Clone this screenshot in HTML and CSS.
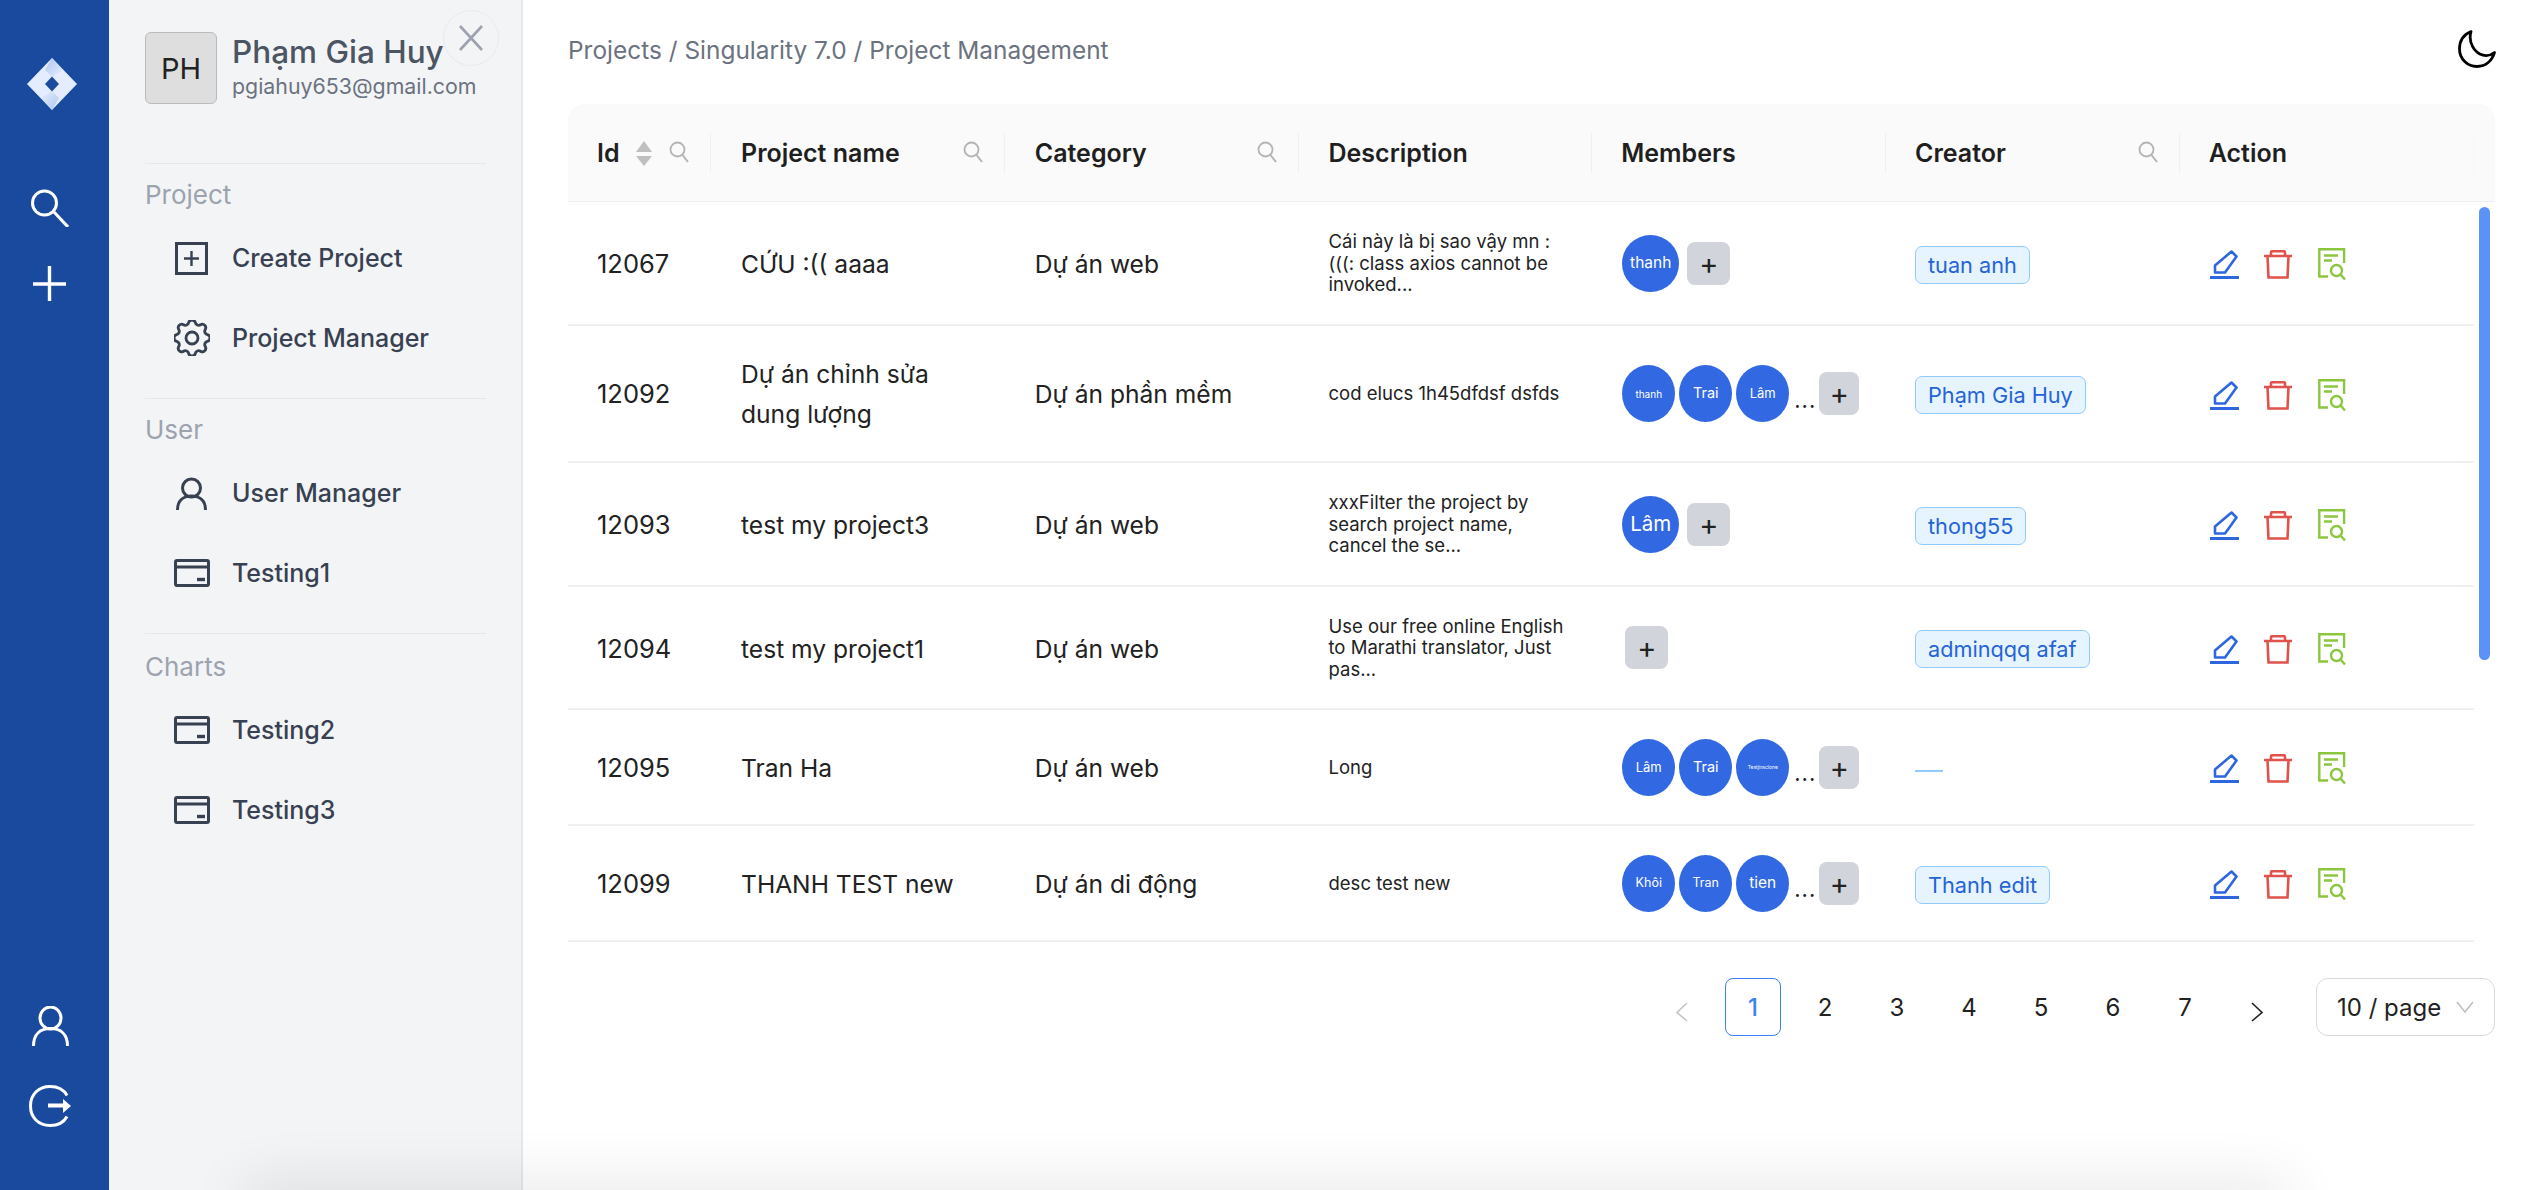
FILE: index.html
```html
<!DOCTYPE html>
<html lang="vi">
<head>
<meta charset="utf-8">
<title>Project Management</title>
<link rel="stylesheet" href="styles.css">
</head>
<body>
<svg class="defs" width="0" height="0" aria-hidden="true">
  <defs>
    <symbol id="card" viewBox="0 0 36 28"><rect x="1.5" y="1.5" width="33" height="25" rx="1.5" fill="none" stroke="currentColor" stroke-width="3"/><path d="M2 8h32" stroke="currentColor" stroke-width="3"/><path d="M23 20.5h8" stroke="currentColor" stroke-width="3.4"/></symbol>
    <symbol id="mag" viewBox="0 0 20 22"><circle cx="8.5" cy="8.5" r="7" fill="none" stroke="currentColor" stroke-width="1.8"/><path d="M13.5 14l5.5 7" stroke="currentColor" stroke-width="2"/></symbol>
    <symbol id="edit" viewBox="0 0 29 29"><path d="M5 22.500V15.500L21.500 1.500l5 5L15 22.500z" fill="none" stroke="currentColor" stroke-width="2.600" stroke-linejoin="round"/><path d="M0 27.500h29" stroke="currentColor" stroke-width="3"/></symbol>
    <symbol id="trash" viewBox="0 0 28 29"><path d="M0 6h28M3.500 6l1 21.500h19l1-21.500M7 6V2.500c0-.8.5-1.300 1.300-1.300h11.400c.8 0 1.300.5 1.300 1.300V6" fill="none" stroke="currentColor" stroke-width="2.600"/></symbol>
    <symbol id="doc" viewBox="0 0 28 32"><path d="M10 28.500H1.300V1.300h24.800V15" fill="none" stroke="currentColor" stroke-width="2.400"/><path d="M6 7.500h14M6 12.500h8" stroke="currentColor" stroke-width="2.400"/><circle cx="18.500" cy="22.500" r="5.500" fill="none" stroke="currentColor" stroke-width="2.400"/><path d="M22.500 26.500l4.500 5" stroke="currentColor" stroke-width="2.400"/></symbol>
  </defs>
</svg>

<div class="app">
  <nav class="rail">
    <div class="rail-top">
      <svg class="logo" width="50" height="52" viewBox="0 0 50 52">
        <defs>
          <linearGradient id="fold-a" x1="0" y1="0" x2="1" y2="1"><stop offset="0" stop-color="#a9c3ee"/><stop offset="1" stop-color="#e4edff"/></linearGradient>
          <linearGradient id="fold-b" x1="1" y1="1" x2="0" y2="0"><stop offset="0" stop-color="#a9c3ee"/><stop offset="1" stop-color="#e4edff"/></linearGradient>
        </defs>
        <path d="M25 0l25 26-25 26L0 26z" fill="#e4edff"/>
        <path d="M25 0l11 12-11 7-7-7z" fill="url(#fold-a)" opacity=".9"/>
        <path d="M25 52L14 40l11-7 7 7z" fill="url(#fold-b)" opacity=".9"/>
        <path d="M25 18.500l7 7.500-7 7.500-7-7.500z" fill="#1a4a9e"/>
      </svg>
      <svg class="rail-search" width="38" height="38" viewBox="0 0 38 38"><circle cx="13.500" cy="14" r="12" fill="none" stroke="#fff" stroke-width="3"/><path d="M23 23l14 15" stroke="#fff" stroke-width="3"/></svg>
      <svg class="rail-plus" width="33" height="35" viewBox="0 0 33 35"><path d="M0 18h33M16.500 0v35" stroke="#fff" stroke-width="3.400"/></svg>
    </div>
    <div class="rail-bottom">
      <svg width="37" height="40" viewBox="0 0 37 40"><ellipse cx="18.500" cy="12" rx="10.500" ry="11" fill="none" stroke="#fff" stroke-width="3"/><path d="M1.500 40c0-12 7-17.500 17-17.500s17 5.500 17 17.500" fill="none" stroke="#fff" stroke-width="3"/></svg>
      <svg width="43" height="42" viewBox="0 0 43 42"><path d="M38 10.500C34.500 4 29 1.500 21 1.500 10 1.500 1.500 9 1.500 21s8.500 19.500 19.500 19.500c8 0 13.500-2.500 17-9" fill="none" stroke="#fff" stroke-width="3"/><path d="M19 20.500h17" stroke="#fff" stroke-width="4"/><path d="M34 14l8 7-8 7z" fill="#fff"/></svg>
    </div>
  </nav>

  <aside class="side">
    <button class="close" type="button" aria-label="Close">
      <svg width="24" height="26" viewBox="0 0 24 26"><path d="M1 1l22 24M23 1L1 25" stroke="#9ca3af" stroke-width="2.600"/></svg>
    </button>
    <div class="profile">
      <div class="initials">PH</div>
      <div class="who">
        <div class="who-name">Phạm Gia Huy</div>
        <div class="who-mail">pgiahuy653@gmail.com</div>
      </div>
    </div>
    <section class="group">
      <h4 class="group-title">Project</h4>
      <a class="item"><span class="item-icon"><svg width="33" height="33" viewBox="0 0 33 33"><rect x="1.500" y="1.500" width="30" height="30" fill="none" stroke="currentColor" stroke-width="3"/><path d="M9 16.500h15M16.500 9v15" stroke="currentColor" stroke-width="2.400"/></svg></span>Create Project</a>
      <a class="item"><span class="item-icon"><svg width="36" height="36" viewBox="3 3 18 18"><path d="M10.325 4.317c.426-1.756 2.924-1.756 3.350 0a1.724 1.724 0 002.573 1.066c1.543-.94 3.310.826 2.370 2.370a1.724 1.724 0 001.065 2.572c1.756.426 1.756 2.924 0 3.350a1.724 1.724 0 00-1.066 2.573c.94 1.543-.826 3.310-2.370 2.370a1.724 1.724 0 00-2.572 1.065c-.426 1.756-2.924 1.756-3.350 0a1.724 1.724 0 00-2.573-1.066c-1.543.94-3.310-.826-2.370-2.370a1.724 1.724 0 00-1.065-2.572c-1.756-.426-1.756-2.924 0-3.350a1.724 1.724 0 001.066-2.573c-.94-1.543.826-3.310 2.370-2.370.996.608 2.296.07 2.572-1.065z" fill="none" stroke="currentColor" stroke-width="1.400"/><circle cx="12" cy="12" r="3" fill="none" stroke="currentColor" stroke-width="1.400"/></svg></span>Project Manager</a>
    </section>
    <section class="group">
      <h4 class="group-title">User</h4>
      <a class="item"><span class="item-icon"><svg width="31" height="33" viewBox="0 0 31 33"><circle cx="15.500" cy="11" r="9" fill="none" stroke="currentColor" stroke-width="3"/><path d="M1.500 33c0-9.500 6-14 14-14s14 4.500 14 14" fill="none" stroke="currentColor" stroke-width="3"/></svg></span>User Manager</a>
      <a class="item"><span class="item-icon"><svg width="36" height="28"><use href="#card"/></svg></span>Testing1</a>
    </section>
    <section class="group">
      <h4 class="group-title">Charts</h4>
      <a class="item"><span class="item-icon"><svg width="36" height="28"><use href="#card"/></svg></span>Testing2</a>
      <a class="item"><span class="item-icon"><svg width="36" height="28"><use href="#card"/></svg></span>Testing3</a>
    </section>
  </aside>

  <main class="main">
    <header class="top">
      <div class="crumbs">Projects / Singularity 7.0 / Project Management</div>
      <svg class="moon" width="38" height="38" viewBox="0 0 38 38"><path d="M13 1.500C4.500 5 1.500 12 1.500 19c0 10 8 17.500 17.500 17.500 9 0 15-6 17.500-14-3.500 2.700-7.500 3.700-11.500 2.700C16 23 10 12 13 1.500z" fill="none" stroke="#000" stroke-width="2.800" stroke-linejoin="round"/></svg>
    </header>

    <div class="board">
      <div class="thumb"></div>
      <table class="grid">
        <colgroup>
          <col class="c-id"><col class="c-m"><col class="c-m"><col class="c-m"><col class="c-m"><col class="c-m"><col class="c-m"><col class="c-gut">
        </colgroup>
        <thead>
          <tr>
            <th class="first"><div class="th"><span>Id</span><span class="th-tools"><span class="sort"><i class="up"></i><i class="down"></i></span><svg class="mag" width="20" height="22"><use href="#mag"/></svg></span></div></th>
            <th class="th-name"><div class="th"><span>Project name</span><svg class="mag" width="20" height="22"><use href="#mag"/></svg></div></th>
            <th class="th-shift"><div class="th"><span>Category</span><svg class="mag" width="20" height="22"><use href="#mag"/></svg></div></th>
            <th class="th-shift"><div class="th"><span>Description</span></div></th>
            <th><div class="th"><span>Members</span></div></th>
            <th><div class="th"><span>Creator</span><svg class="mag" width="20" height="22"><use href="#mag"/></svg></div></th>
            <th><div class="th"><span>Action</span></div></th>
            <th class="gutter-head"></th>
          </tr>
        </thead>
        <tbody>
          <tr class="r-124">
            <td class="id">12067</td><td class="name">CỨU :(( aaaa</td><td class="cat">Dự án web</td>
            <td class="desc">Cái này là bị sao vậy mn : (((: class axios cannot be invoked...</td>
            <td class="mem"><div class="members"><span class="ava wide f15">thanh</span><button class="add" type="button">+</button></div></td>
            <td><span class="tag">tuan anh</span></td>
            <td class="act"><div class="acts"><svg class="a-edit" width="29" height="29"><use href="#edit"/></svg><svg class="a-del" width="28" height="29"><use href="#trash"/></svg><svg class="a-doc" width="28" height="32"><use href="#doc"/></svg></div></td>
            <td class="gutter"></td>
          </tr>
          <tr class="r-137">
            <td class="id">12092</td><td class="name">Dự án chỉnh sửa dung lượng</td><td class="cat">Dự án phần mềm</td>
            <td class="desc">cod elucs 1h45dfdsf dsfds</td>
            <td class="mem"><div class="members"><span class="ava f10">thanh</span><span class="ava f14">Trai</span><span class="ava f13">Lâm</span><span class="more">...</span><button class="add narrow" type="button">+</button></div></td>
            <td><span class="tag">Phạm Gia Huy</span></td>
            <td class="act"><div class="acts"><svg class="a-edit" width="29" height="29"><use href="#edit"/></svg><svg class="a-del" width="28" height="29"><use href="#trash"/></svg><svg class="a-doc" width="28" height="32"><use href="#doc"/></svg></div></td>
            <td class="gutter"></td>
          </tr>
          <tr class="r-124">
            <td class="id">12093</td><td class="name">test my project3</td><td class="cat">Dự án web</td>
            <td class="desc">xxxFilter the project by search project name, cancel the se...</td>
            <td class="mem"><div class="members"><span class="ava wide f20">Lâm</span><button class="add" type="button">+</button></div></td>
            <td><span class="tag">thong55</span></td>
            <td class="act"><div class="acts"><svg class="a-edit" width="29" height="29"><use href="#edit"/></svg><svg class="a-del" width="28" height="29"><use href="#trash"/></svg><svg class="a-doc" width="28" height="32"><use href="#doc"/></svg></div></td>
            <td class="gutter"></td>
          </tr>
          <tr class="r-123">
            <td class="id">12094</td><td class="name">test my project1</td><td class="cat">Dự án web</td>
            <td class="desc">Use our free online English to Marathi translator, Just pas...</td>
            <td class="mem"><div class="members only-add"><button class="add" type="button">+</button></div></td>
            <td><span class="tag">adminqqq afaf</span></td>
            <td class="act"><div class="acts"><svg class="a-edit" width="29" height="29"><use href="#edit"/></svg><svg class="a-del" width="28" height="29"><use href="#trash"/></svg><svg class="a-doc" width="28" height="32"><use href="#doc"/></svg></div></td>
            <td class="gutter"></td>
          </tr>
          <tr class="r-116">
            <td class="id">12095</td><td class="name">Tran Ha</td><td class="cat">Dự án web</td>
            <td class="desc">Long</td>
            <td class="mem"><div class="members"><span class="ava f13">Lâm</span><span class="ava f14">Trai</span><span class="ava f5">Testjiraclone</span><span class="more">...</span><button class="add narrow" type="button">+</button></div></td>
            <td><span class="dash"></span></td>
            <td class="act"><div class="acts"><svg class="a-edit" width="29" height="29"><use href="#edit"/></svg><svg class="a-del" width="28" height="29"><use href="#trash"/></svg><svg class="a-doc" width="28" height="32"><use href="#doc"/></svg></div></td>
            <td class="gutter"></td>
          </tr>
          <tr class="r-116">
            <td class="id">12099</td><td class="name">THANH TEST new</td><td class="cat">Dự án di động</td>
            <td class="desc">desc test new</td>
            <td class="mem"><div class="members"><span class="ava f12">Khôi</span><span class="ava f12">Tran</span><span class="ava f15">tien</span><span class="more">...</span><button class="add narrow" type="button">+</button></div></td>
            <td><span class="tag">Thanh edit</span></td>
            <td class="act"><div class="acts"><svg class="a-edit" width="29" height="29"><use href="#edit"/></svg><svg class="a-del" width="28" height="29"><use href="#trash"/></svg><svg class="a-doc" width="28" height="32"><use href="#doc"/></svg></div></td>
            <td class="gutter"></td>
          </tr>
        </tbody>
      </table>
    </div>

    <div class="pager">
      <span class="pg chev"><svg width="13" height="20" viewBox="0 0 13 20"><path d="M12 1L2 10.500 12 19" fill="none" stroke="#c4c4c4" stroke-width="1.600"/></svg></span>
      <span class="pg on">1</span><span class="pg">2</span><span class="pg">3</span><span class="pg">4</span><span class="pg">5</span><span class="pg">6</span><span class="pg">7</span>
      <span class="pg chev"><svg width="13" height="20" viewBox="0 0 13 20"><path d="M1 1l10 9.500L1 19" fill="none" stroke="#222" stroke-width="1.600"/></svg></span>
      <div class="size">10 / page<svg width="18" height="12" viewBox="0 0 18 12"><path d="M1 1l8 10 8-10" fill="none" stroke="#bdbdbd" stroke-width="1.500"/></svg></div>
    </div>
  </main>
</div>
<div class="glow"></div>
</body>
</html>
```

FILE: styles.css
```css
* { box-sizing: border-box; }
html, body { height: 100%; }
body {
  margin: 0;
  overflow: hidden;
  background: #fff;
  color: #222;
  font-family: Inter, "Noto Sans", "Liberation Sans", sans-serif;
}
.defs { position: absolute; }
.app { display: flex; height: 1190px; }

/* left rail */
.rail {
  position: relative;
  z-index: 3;
  width: 109px;
  flex: none;
  background: #1a4a9e;
  display: flex;
  flex-direction: column;
  justify-content: space-between;
  align-items: center;
  padding: 58px 0 63px;
}
.rail-top, .rail-bottom { display: flex; flex-direction: column; align-items: center; }
.rail-top svg, .rail-bottom svg { display: block; }
.logo { margin-left: -6px; }
.rail-search { margin-top: 79px; margin-left: -10px; }
.rail-plus { margin-top: 39px; margin-left: -10px; }
.rail-bottom { gap: 39px; margin-left: -8px; }

/* side panel */
.side {
  position: relative;
  width: 414px;
  flex: none;
  background: #f3f4f6;
  border-right: 2px solid #e5e7eb;
  padding: 32px 35px 0 36px;
}
.close {
  position: absolute;
  top: 10px;
  left: 334px;
  width: 56px;
  height: 56px;
  padding: 0;
  border: 1px solid #e8eaed;
  border-radius: 50%;
  background: transparent;
  display: flex;
  align-items: center;
  justify-content: center;
}
.profile { display: flex; gap: 15px; height: 131px; align-items: flex-start; }
.initials {
  width: 72px;
  height: 72px;
  flex: none;
  display: flex;
  align-items: center;
  justify-content: center;
  background: #dedede;
  border: 1px solid #b9bbbf;
  border-radius: 6px;
  font-size: 29px;
  color: #222;
}
.who-name { font-size: 31.500px; font-weight: 500; line-height: 40px; color: #4b5563; white-space: nowrap; }
.who-mail { font-size: 21.350px; line-height: 26px; margin-top: 1px; color: #6b7280; white-space: nowrap; }
.group { border-top: 1px solid #e5e7eb; height: 235px; padding-top: 17px; }
.group:last-child { padding-top: 19px; }
.group-title { margin: 0; font-size: 26px; line-height: 28px; font-weight: 400; color: #9ca3af; }
.item {
  display: flex;
  align-items: center;
  height: 80px;
  font-size: 25px;
  font-weight: 500;
  color: #374151;
  white-space: nowrap;
}
.group-title + .item { margin-top: 9px; }
.item-icon { width: 87px; padding-left: 20px; padding-right: 14px; flex: none; display: flex; justify-content: center; }
.item-icon svg { display: block; }

/* main */
.main { flex: 1; min-width: 0; padding: 0 37px 0 45px; }
.top { height: 104px; display: flex; justify-content: space-between; align-items: flex-start; }
.crumbs { margin-top: 35px; font-size: 24.450px; line-height: 30px; color: #6b7280; }
.moon { margin-top: 30px; margin-right: -1px; }

.board { position: relative; }
.thumb {
  position: absolute;
  top: 103px;
  right: 5px;
  width: 11px;
  height: 453px;
  border-radius: 6px;
  background: #5b92f5;
}
.grid { width: 1927px; border-collapse: separate; border-spacing: 0; table-layout: fixed; font-size: 24.600px; }
.c-id { width: 143px; }
.c-m { width: 293.750px; }
.c-gut { width: 21.500px; }

.grid th {
  position: relative;
  height: 98px;
  padding: 2px 22px 0 29px;
  background: #fafafa;
  border-bottom: 1px solid #f0f0f0;
  font-size: 25px;
  font-weight: 600;
  text-align: left;
  color: #1f1f1f;
}
.grid th.th-name { padding-left: 30px; }
.grid th.th-shift { padding-left: 30px; }
.grid th::after {
  content: "";
  position: absolute;
  right: -1px;
  top: 29px;
  width: 2px;
  height: 40px;
  background: #f0f0f0;
}
.grid th:nth-child(7)::after { background: #f6f6f6; }
.grid th.first { border-top-left-radius: 16px; }
.grid th.gutter-head { padding: 0; border-top-right-radius: 16px; }
.grid th.gutter-head::after { display: none; }
.th { display: flex; align-items: center; justify-content: space-between; margin-top: -1px; }
.th-tools { display: flex; align-items: center; gap: 17px; }
.mag { color: #b4b4b4; display: block; margin-top: -2px; }
.sort { display: flex; flex-direction: column; gap: 4px; }
.sort i { display: block; width: 0; height: 0; border-left: 8px solid transparent; border-right: 8px solid transparent; }
.sort .up { border-bottom: 11px solid #bfbfbf; }
.sort .down { border-top: 10px solid #bfbfbf; }

.grid td {
  padding: 0 29px;
  border-bottom: 2px solid #f0f0f0;
  vertical-align: middle;
  color: #222;
  line-height: 40px;
}
.grid td.id, .grid td.cat, .grid td.name { padding-top: 2px; }
.grid .r-137 td.id, .grid .r-137 td.cat, .grid .r-137 td.name { padding-top: 0; }
.grid td.id { font-size: 25.500px; }
.grid td.name, .grid td.cat, .grid td.desc, .grid td.mem, .grid td.act { padding-left: 30px; }
.grid td.gutter { padding: 0; border-bottom-color: transparent; }
.r-124 { height: 124px; }
.r-137 { height: 137px; }
.r-123 { height: 123px; }
.r-116 { height: 116px; }

.grid td.desc { font-size: 18.500px; line-height: 21.500px; padding-top: 1px; padding-right: 25px; }

.members { display: flex; align-items: center; gap: 4px; }
.only-add { padding-left: 3px; }
.ava {
  flex: none;
  width: 53px;
  height: 57px;
  border-radius: 50%;
  background: #3269e3;
  color: #fff;
  display: flex;
  align-items: center;
  justify-content: center;
  white-space: nowrap;
  overflow: hidden;
  line-height: 1;
}
.ava.wide { width: 57px; }
.f5 { font-size: 5px; }
.f10 { font-size: 10px; }
.f12 { font-size: 12.500px; }
.f13 { font-size: 13px; }
.f14 { font-size: 14.500px; }
.f15 { font-size: 15.500px; }
.f20 { font-size: 20.500px; }
.more { width: 23px; text-align: center; font-size: 22px; line-height: 1; margin: 12px -1px 0 1px; letter-spacing: 1px; color: #222; }
.add {
  flex: none;
  width: 43px;
  height: 43px;
  padding: 0;
  margin-left: 4px;
  border: 0;
  border-radius: 8px;
  background: #d1d5db;
  color: #222;
  font: 400 29px/43px Inter, "Noto Sans", sans-serif;
}
.only-add .add { margin-left: 0; }
.add.narrow { width: 40px; margin-left: 0; }

.tag {
  display: inline-block;
  height: 38px;
  padding: 0 12px;
  border: 1px solid #91caff;
  border-radius: 7px;
  background: #e6f4ff;
  color: #2563d8;
  font-size: 21.700px;
  line-height: 36px;
  white-space: nowrap;
  vertical-align: middle;
}
.dash { display: block; width: 28px; height: 2px; margin-top: 8px; background: #91caff; }

.acts { display: flex; align-items: center; gap: 25px; height: 32px; padding-top: 3px; }
.acts svg { display: block; flex: none; }
.a-edit { color: #2e66e0; }
.a-del { color: #e0534c; }
.a-doc { color: #8cc63f; margin-top: -1px; margin-left: 1px; }

/* pagination */
.pager { display: flex; justify-content: flex-end; align-items: center; gap: 16px; margin-top: 36px; }
.pg {
  width: 56px;
  height: 58px;
  display: flex;
  align-items: center;
  justify-content: center;
  font-size: 24px;
  color: #222;
  border-radius: 8px;
}
.pg.on { border: 1px solid #3b82f6; color: #3b82f6; font-weight: 500; }
.chev svg { margin-top: 10px; }
.size {
  width: 179px;
  height: 58px;
  margin-left: 15px;
  padding: 0 20px;
  border: 1px solid #d9d9d9;
  border-radius: 12px;
  display: flex;
  align-items: center;
  justify-content: space-between;
  font-size: 24px;
}

/* shadow from a surface just below the fold */
.glow {
  position: fixed;
  left: 250px;
  right: 250px;
  bottom: -30px;
  height: 30px;
  z-index: 2;
  box-shadow: 0 0 60px 6px rgba(0, 0, 0, .11);
}
```
